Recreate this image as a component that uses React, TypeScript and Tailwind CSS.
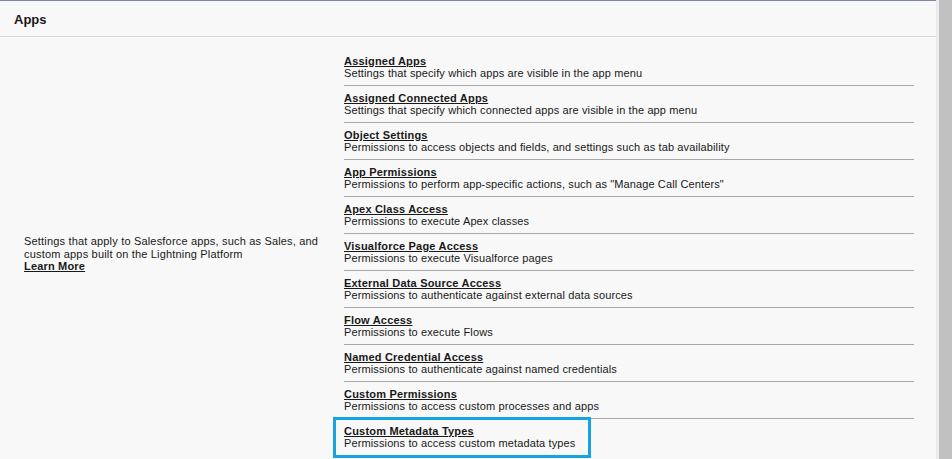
import React from "react";

const rows = [
  ["Assigned Apps", "Settings that specify which apps are visible in the app menu"],
  ["Assigned Connected Apps", "Settings that specify which connected apps are visible in the app menu"],
  ["Object Settings", "Permissions to access objects and fields, and settings such as tab availability"],
  ["App Permissions", "Permissions to perform app-specific actions, such as \"Manage Call Centers\""],
  ["Apex Class Access", "Permissions to execute Apex classes"],
  ["Visualforce Page Access", "Permissions to execute Visualforce pages"],
  ["External Data Source Access", "Permissions to authenticate against external data sources"],
  ["Flow Access", "Permissions to execute Flows"],
  ["Named Credential Access", "Permissions to authenticate against named credentials"],
  ["Custom Permissions", "Permissions to access custom processes and apps"],
  ["Custom Metadata Types", "Permissions to access custom metadata types"],
];

export default function App() {
  return (
    <div
      className="flex h-[459px] w-[952px] overflow-hidden bg-[#f8f8f8] text-[#181818]"
      style={{ fontFamily: '"Liberation Sans", Arial, sans-serif' }}
    >
      <div className="flex w-[936px] flex-col border-t border-[#7d87a8]">
        <div className="border-b border-[#d6d6d6] pl-[14px] pt-[11px] pb-[8px] text-[13px] font-bold leading-[16px]">
          Apps
        </div>
        <div className="flex border-t border-white pt-[11px]">
          <div className="flex w-[344px] items-center pl-[24px] pr-[14px] pt-[4px] text-[11px] leading-[12.5px] tracking-[0.18px]">
            <div>
              <div>Settings that apply to Salesforce apps, such as Sales, and custom apps built on the Lightning Platform</div>
              <div className="font-bold underline">Learn More</div>
            </div>
          </div>
          <div className="flex-1 pr-[22px]">
            {rows.map(([t, d], i) => {
              const last = i === rows.length - 1;
              return (
                <div
                  key={t}
                  className={
                    "relative pt-[6px] pb-[5px] text-[11px] " +
                    (last ? "" : "border-b border-[#a6a6a6]")
                  }
                >
                  <div className="font-bold leading-[12px] underline tracking-[0.2px]">{t}</div>
                  <div className="leading-[13px] tracking-[0.12px]">{d}</div>
                  {last && (
                    <div className="absolute left-[-11px] top-[-2px] h-[41px] w-[258px] border-[3px] border-[#16a3df]" />
                  )}
                </div>
              );
            })}
          </div>
        </div>
      </div>
      <div className="w-[3px] bg-[#ececec]" />
      <div className="w-[13px] bg-[#c1c1c1]" />
    </div>
  );
}
